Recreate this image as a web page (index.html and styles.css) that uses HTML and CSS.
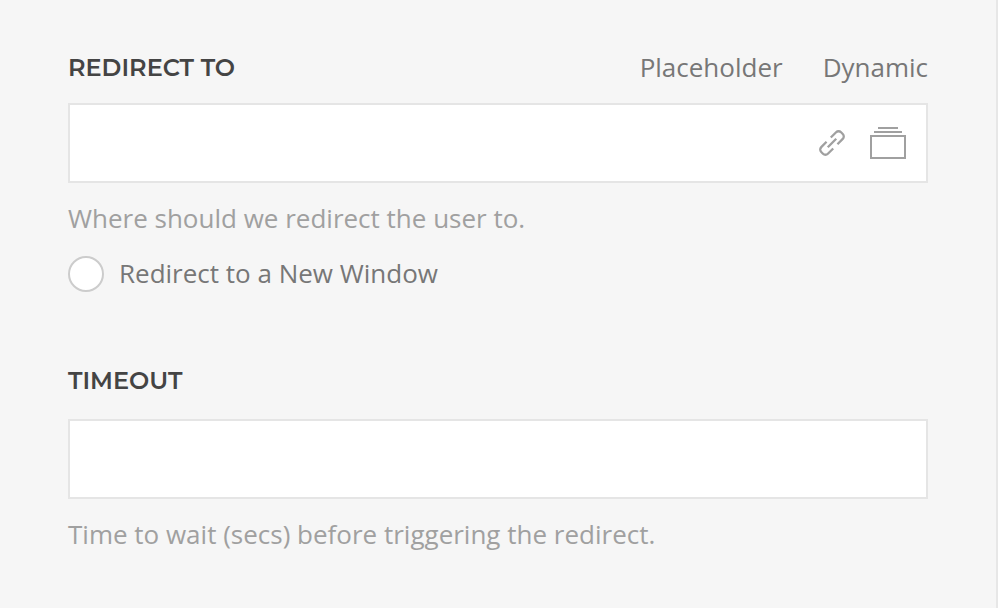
FILE: index.html
```html
<!DOCTYPE html>
<html lang="en">
<head>
<meta charset="utf-8">
<title>Redirect settings</title>
<link rel="stylesheet" href="styles.css">
</head>
<body>
<main class="panel">
  <section class="field">
    <header class="head">
      <h2 class="title">REDIRECT TO</h2>
      <nav class="links"><span>Placeholder</span><span>Dynamic</span></nav>
    </header>
    <div class="box">
      <svg class="link" viewBox="0 0 30 30" width="30" height="30">
        <g transform="rotate(-45 15 15)" fill="none" stroke="#a0a0a0" stroke-width="2.3">
          <path d="M12 10.300H4.500a3.500 3.500 0 0 0-3.500 3.500v2.400a3.500 3.500 0 0 0 3.500 3.500H12M18 10.300h7.500a3.500 3.500 0 0 1 3.500 3.500v2.400a3.500 3.500 0 0 1-3.500 3.500H18M9 15h12"/>
        </g>
      </svg>
      <svg class="stack" viewBox="0 0 36 34" width="36" height="34">
        <path d="M1 10h34v22H1zM4 6h28M8 2h20" fill="none" stroke="#a0a0a0" stroke-width="2"/>
      </svg>
    </div>
    <p class="help">Where should we redirect the user to.</p>
    <label class="choice"><span class="radio"></span><span class="choice-text">Redirect to a New Window</span></label>
  </section>
  <section class="field timeout">
    <header class="head"><h2 class="title">TIMEOUT</h2></header>
    <div class="box"></div>
    <p class="help">Time to wait (secs) before triggering the redirect.</p>
  </section>
</main>
</body>
</html>
```
FILE: styles.css
```css
* { box-sizing: border-box; }
body { margin: 0; background: #f6f6f6; }
.panel {
  height: 608px;
  padding: 48px 68px 0;
  border-right: 2px solid #e7e7e7;
  font: 26px/40px "Open Sans", sans-serif;
  color: #777;
}
.field { width: 860px; }
.head { display: flex; justify-content: space-between; height: 40px; }
.title { margin: 0; font: 600 24px/40px Montserrat, "Open Sans", sans-serif; color: #444; }
.links { display: flex; gap: 40px; line-height: 38px; }
.box {
  display: flex;
  align-items: center;
  justify-content: flex-end;
  gap: 23px;
  height: 80px;
  margin-top: 15px;
  padding-right: 20px;
  background: #fff;
  border: 2px solid #e5e5e5;
}
.help { height: 40px; margin: 16px 0 0; line-height: 38px; color: #a0a0a0; }
.choice { display: flex; align-items: center; gap: 15px; height: 40px; margin-top: 15px; }
.choice-text { height: 40px; line-height: 38px; }
.radio { width: 36px; height: 36px; border: 2px solid #ccc; border-radius: 50%; background: #fff; }
.timeout { margin-top: 67px; }
.timeout .box { margin-top: 18px; }
```
